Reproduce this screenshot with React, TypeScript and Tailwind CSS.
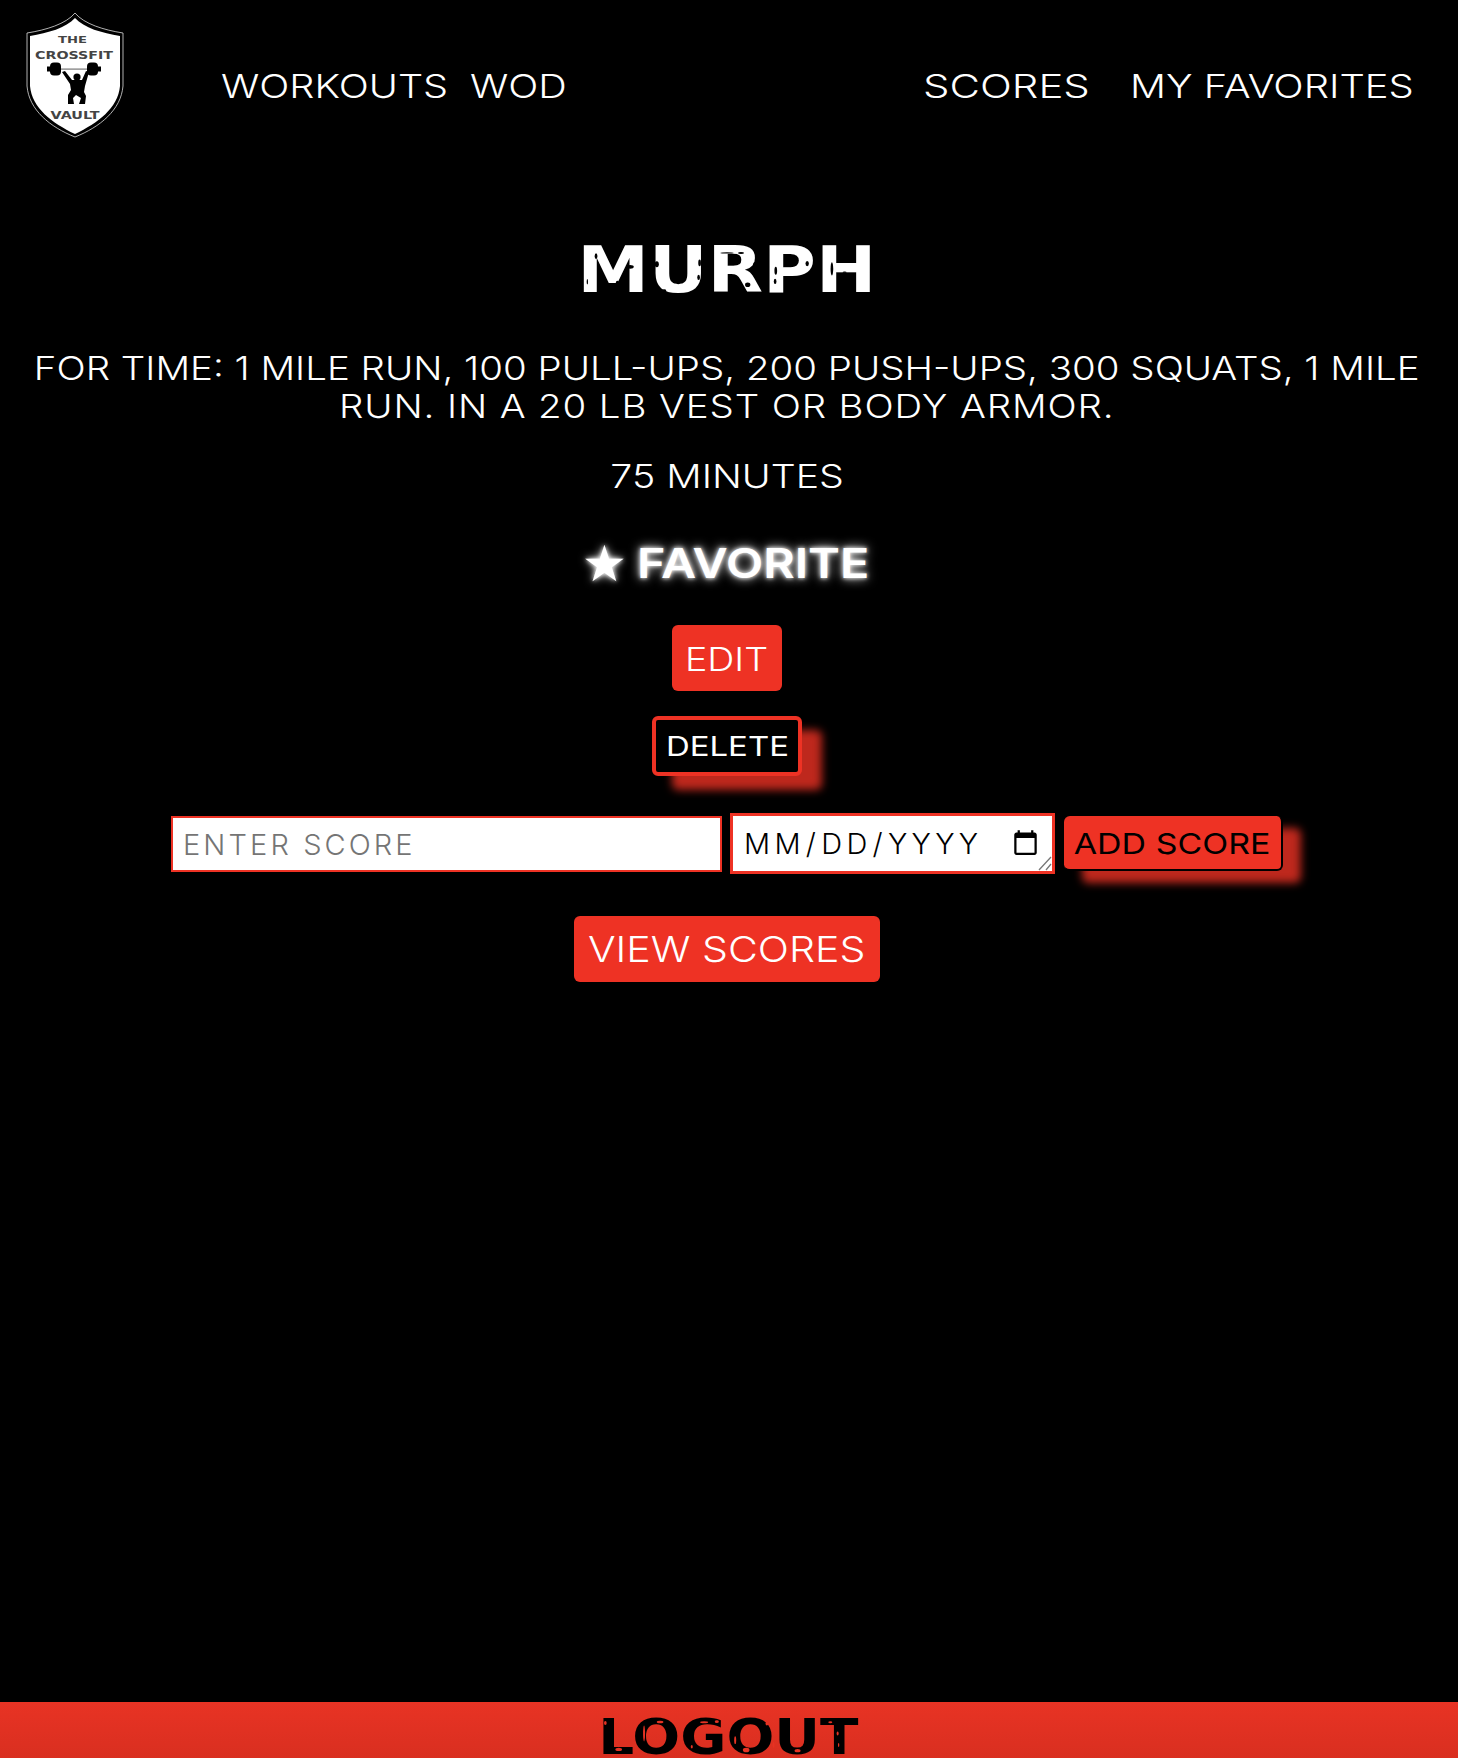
const navLink = "inline-block origin-left font-light text-[33px] leading-[50px] text-white whitespace-nowrap"

// worn-paint specks over the stencil headings, in image coordinates of the lettering
const murphSpecks = [
  [198, 128, 4, 9], [300, 160, 11, 6], [262, 212, 5, 10], [380, 152, 6, 9], [508, 148, 4, 10], [505, 192, 4, 8],
  [402, 232, 6, 4], [590, 118, 20, 2], [632, 118, 9, 3], [672, 162, 4, 16], [652, 214, 8, 7], [736, 172, 4, 12],
  [734, 204, 4, 8], [830, 150, 5, 8], [904, 166, 4, 20], [942, 176, 6, 2], [172, 205, 2, 8],
]
const logoutSpecks = [
  [136, 98, 4, 6], [176, 178, 10, 5], [300, 95, 10, 4], [252, 130, 3, 24], [432, 96, 12, 3], [470, 94, 6, 4],
  [525, 150, 3, 12], [558, 180, 10, 7], [620, 100, 4, 6], [712, 182, 9, 5], [810, 96, 6, 3], [832, 130, 3, 6], [835, 165, 2, 6],
  [395, 170, 3, 5], [640, 165, 3, 9],
]

function Logo() {
  return (
    <svg viewBox="25 11 100 128" className="w-[100px] h-[128px] shrink-0 mt-[11px] ml-[25px]">
      {/* shield */}
      <path d="M75 13 C84 24 104 30 123 33 L123 86 C121 110 100 127 75 137 C50 127 29 110 27 86 L27 33 C46 30 66 24 75 13 Z" fill="#000" stroke="#ddd" strokeWidth="0.8" />
      <path d="M75 18 C84 28 102 33 120 36 L120 86 C118 108 98 123 75 134 C52 123 32 108 30 86 L30 36 C48 33 66 28 75 18 Z" fill="#fff" />
      <text x="72.5" y="43" textAnchor="middle" fontFamily="DejaVu Sans" fontWeight="700" fontSize="9" textLength="29" lengthAdjust="spacingAndGlyphs" fill="#444">THE</text>
      <text x="74" y="59" textAnchor="middle" fontFamily="DejaVu Sans" fontWeight="700" fontSize="10" textLength="78" lengthAdjust="spacingAndGlyphs" fill="#444">CROSSFIT</text>
      <text x="75" y="119" textAnchor="middle" fontFamily="DejaVu Sans" fontWeight="700" fontSize="10" textLength="49" lengthAdjust="spacingAndGlyphs" fill="#444">VAULT</text>
      {/* barbell and lifter */}
      <rect x="47" y="68.5" width="54" height="1.2" fill="#777" />
      <rect x="47" y="66.5" width="3" height="5" fill="#000" />
      <rect x="98" y="66.5" width="3" height="5" fill="#000" />
      <rect x="50" y="62.5" width="11" height="13" rx="4" fill="#000" />
      <rect x="87" y="62.5" width="11" height="13" rx="4" fill="#000" />
      <circle cx="77" cy="77" r="3.6" fill="#000" />
      <path d="M62 72 L65 71 L72 80 L82 80 L86 71 L89 72 L85 86 L84 92 L86 96 L85 104 L79 104 L81 98 L76 95 L73 98 L74 104 L68 104 L68 95 L71 90 L70 84 Z" fill="#000" />
    </svg>
  )
}

export default function App() {
  return (
    <div className="min-h-[1758px] bg-black flex flex-col font-['Inter',sans-serif] text-white">
      <header className="flex items-start h-[150px]">
        <Logo />
        <nav className="flex flex-1 mt-[61px] pl-[96px] pr-[93px]">
          <a className={navLink + " scale-x-[1.2]"}>WORKOUTS</a>
          <a className={navLink + " scale-x-[1.2] ml-[60px]"}>WOD</a>
          <a className={navLink + " scale-x-[1.27] ml-auto"}>SCORES</a>
          <a className={navLink + " scale-x-[1.21] ml-[76px]"}>MY FAVORITES</a>
        </nav>
      </header>

      <main className="flex flex-col items-center pt-[88px] pr-[4px]">
        <div className="relative w-[294px] h-[64px] flex justify-center">
          <h1 className="inline-block scale-x-[1.127] font-['DejaVu_Sans',sans-serif] font-bold text-[64px] leading-none whitespace-nowrap">MURPH</h1>
          <svg viewBox="150 100 880 145" preserveAspectRatio="none" className="absolute left-0 top-[9px] w-[294px] h-[48px]">
            {murphSpecks.map(([x, y, rx, ry], i) => (
              <ellipse key={i} cx={x} cy={y} rx={rx} ry={ry} fill="#000" />
            ))}
          </svg>
        </div>
        <p className="mt-[47px] text-center font-light text-[33px] leading-[38px] whitespace-nowrap scale-x-[1.165]">
          FOR TIME: 1 MILE RUN, 100 PULL-UPS, 200 PUSH-UPS, 300 SQUATS, 1 MILE<br />
          <span className="tracking-[0.75px]">RUN. IN A 20 LB VEST OR BODY ARMOR.</span>
        </p>
        <p className="mt-[32px] font-light text-[33px] leading-[38px] scale-x-[1.19]">75 MINUTES</p>

        <button className="mt-[43px] flex items-center gap-[10px] h-[50px] text-[41px] font-semibold pt-[2px] pr-[3px] [text-shadow:0_0_10px_#fff,0_0_4px_#fff]">
          <span className="font-['DejaVu_Sans',sans-serif] text-[50px] leading-none">★</span>
          <span className="inline-block w-[232px] origin-left scale-x-[1.18] text-left whitespace-nowrap">FAVORITE</span>
        </button>

        <button className="mt-[37px] w-[110px] h-[66px] pt-[3px] rounded-[6px] bg-[#ee3224] text-[33px] font-light">
          <span className="inline-block scale-x-[1.14]">EDIT</span>
        </button>

        <button className="mt-[25px] w-[150px] h-[60px] pt-[3px] rounded-[6px] border-4 border-[#ee3224] bg-black text-[27px] shadow-[20px_14px_8px_rgba(238,50,36,0.8)]">
          <span className="inline-block scale-x-[1.22]">DELETE</span>
        </button>

        <form className="mt-[37px] flex items-center">
          <input
            placeholder="ENTER SCORE"
            className="w-[551px] h-[56px] border-2 border-[#ee3224] bg-white pl-[10px] pr-[10px] pt-[1px] text-[29px] font-light tracking-[3.1px] text-black placeholder:text-[#757575] outline-none"
          />
          <div className="relative ml-[8px]">
            <input
              type="date"
              className="block w-[325px] h-[61px] border-[3px] border-[#ee3224] bg-white pl-[10px] pr-[10px] text-[29px] font-light tracking-[4.3px] text-black uppercase"
            />
            {/* resize grip */}
            <svg viewBox="0 0 14 16" className="absolute right-[3px] bottom-[3px] w-[14px] h-[16px]">
              <path d="M1 15 L13 2 M8 15 L13 9" stroke="#777" strokeWidth="1.3" fill="none" />
            </svg>
          </div>
          <button type="button" className="ml-[9px] w-[219px] h-[55px] pt-[2px] rounded-[6px] bg-[#ee3224] border-r-2 border-b-2 border-black text-[29px] text-black shadow-[18px_12px_8px_rgba(238,50,36,0.8)]">
            <span className="inline-block scale-x-[1.17] whitespace-nowrap">ADD SCORE</span>
          </button>
        </form>

        <button className="mt-[42px] w-[306px] h-[66px] rounded-[6px] bg-[#ee3224] text-[36px] font-light">
          <span className="inline-block scale-x-[1.14] whitespace-nowrap">VIEW SCORES</span>
        </button>
      </main>

      <footer className="mt-auto h-[56px] bg-gradient-to-b from-[#e83324] to-[#d92f20] flex justify-center pr-[2px]">
        <div className="relative w-[257px] h-[56px] flex justify-center">
          <button className="inline-block scale-x-[1.127] font-['DejaVu_Sans',sans-serif] font-bold text-[50px] leading-[40px] pt-[14px] text-black whitespace-nowrap">LOGOUT</button>
          <svg viewBox="120 80 770 112" preserveAspectRatio="none" className="absolute left-0 top-[15px] w-[257px] h-[37px]">
            {logoutSpecks.map(([x, y, rx, ry], i) => (
              <ellipse key={i} cx={x} cy={y} rx={rx} ry={ry} fill="#e63323" />
            ))}
          </svg>
        </div>
      </footer>
    </div>
  )
}
